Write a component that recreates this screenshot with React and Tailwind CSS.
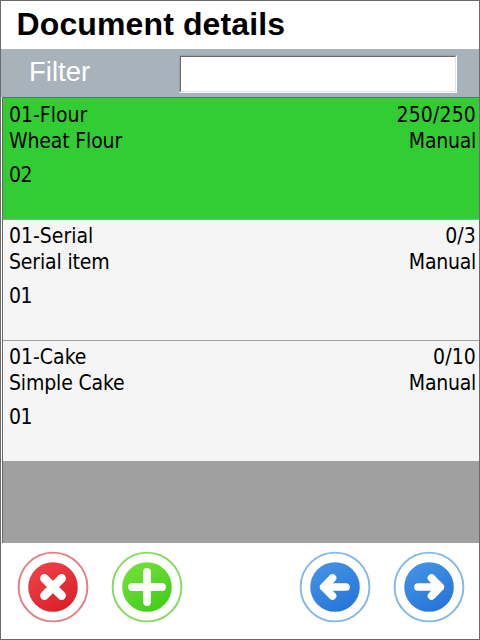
import React from "react";

const items = [
  { code: "01-Flour", name: "Wheat Flour", line: "02", qty: "250/250", mode: "Manual", done: true },
  { code: "01-Serial", name: "Serial item", line: "01", qty: "0/3", mode: "Manual" },
  { code: "01-Cake", name: "Simple Cake", line: "01", qty: "0/10", mode: "Manual" },
];

function Row({ item }) {
  return (
    <div
      className={`h-[121px] border-b border-[#a0a0a0] pl-[6px] pr-[3px] pt-[3px] text-[21px] leading-[26px] tracking-[-0.1px] text-black first:h-[122px] first:pt-[4px] last:h-[120px] last:border-b-0 ${
        item.done ? "bg-[#32cd32]" : "bg-[#f5f5f5]"
      }`}
    >
      <div className="flex justify-between">
        <span className="tracking-normal">{item.code}</span>
        <span className="tracking-[0.15px]">{item.qty}</span>
      </div>
      <div className="flex justify-between">
        <span className="tracking-[-0.15px]">{item.name}</span>
        <span className="tracking-[-0.25px]">{item.mode}</span>
      </div>
      <div className="mt-2 tracking-[-0.4px]">{item.line}</div>
    </div>
  );
}

function RoundButton({ id, label, ring, from, to, children }) {
  return (
    <button type="button" aria-label={label} className="size-[72px] shrink-0">
      <svg viewBox="0 0 72 72" className="size-full" fill="none">
        <defs>
          <linearGradient id={id} x1="0.2" y1="0" x2="0.8" y2="1">
            <stop stopColor={from} />
            <stop offset="1" stopColor={to} />
          </linearGradient>
        </defs>
        <circle cx="36" cy="36" r="34.4" stroke={ring} strokeWidth="1.9" />
        <circle cx="36" cy="36" r="24.8" fill={`url(#${id})`} />
        <g stroke="#fff" strokeLinecap="round" strokeLinejoin="round">{children}</g>
      </svg>
    </button>
  );
}

export default function App() {
  return (
    <div className="flex h-[640px] w-[480px] flex-col overflow-hidden border border-[#6b6b6b] bg-white">
      <header className="h-[48px] shrink-0 pl-[15.5px]">
        <h1 className="font-['Liberation_Sans',Arial,sans-serif] text-[32px] font-bold leading-[46px] tracking-[0.12px] text-black">
          Document details
        </h1>
      </header>
      <div className="flex h-[48px] shrink-0 items-start bg-[#a8b2ba]">
        <label
          htmlFor="filter"
          className="w-[178px] pl-[28px] pt-[2px] font-['Liberation_Sans',Arial,sans-serif] text-[27.5px] leading-[42px] text-white"
        >
          Filter
        </label>
        <div className="mt-[6px] h-[38px] w-[278px] border border-b-white border-l-[#a0a0a0] border-r-white border-t-[#a0a0a0]">
          <input
            id="filter"
            className="block size-full border border-b-[#e3e3e3] border-l-[#696969] border-r-[#e3e3e3] border-t-[#696969] bg-white outline-none"
          />
        </div>
      </div>
      <main className="ml-px h-[446px] shrink-0 border-l border-t border-[#696969] bg-[#a0a0a0] font-['DejaVu_Sans_Condensed','DejaVu_Sans',Tahoma,sans-serif] [font-stretch:condensed]">
        {items.map((item) => (
          <Row key={item.code} item={item} />
        ))}
      </main>
      <footer className="flex flex-1 items-start pl-[16px] pt-[8px]">
        <div className="flex gap-[22px]">
          <RoundButton id="red" label="Cancel" ring="#e47c80" from="#ee4348" to="#d91e27">
            <path d="M27.4 27.4 44.6 44.6M44.6 27.4 27.4 44.6" strokeWidth="8.6" />
          </RoundButton>
          <RoundButton id="green" label="Add" ring="#80dc5c" from="#73e13c" to="#40cc16">
            <path d="M36 21v30M21 36h30" strokeWidth="7.8" />
          </RoundButton>
        </div>
        <div className="ml-[116px] flex gap-[22px]">
          <RoundButton id="blueBack" label="Previous" ring="#80b8ea" from="#4593e4" to="#2474d9">
            <path d="M24.7 36H47M33.5 27l-8.8 9 8.8 9" strokeWidth="7.7" />
          </RoundButton>
          <RoundButton id="blueNext" label="Next" ring="#80b8ea" from="#4593e4" to="#2474d9">
            <path d="M25 36h22.3M38.5 27l8.8 9-8.8 9" strokeWidth="7.7" />
          </RoundButton>
        </div>
      </footer>
    </div>
  );
}
